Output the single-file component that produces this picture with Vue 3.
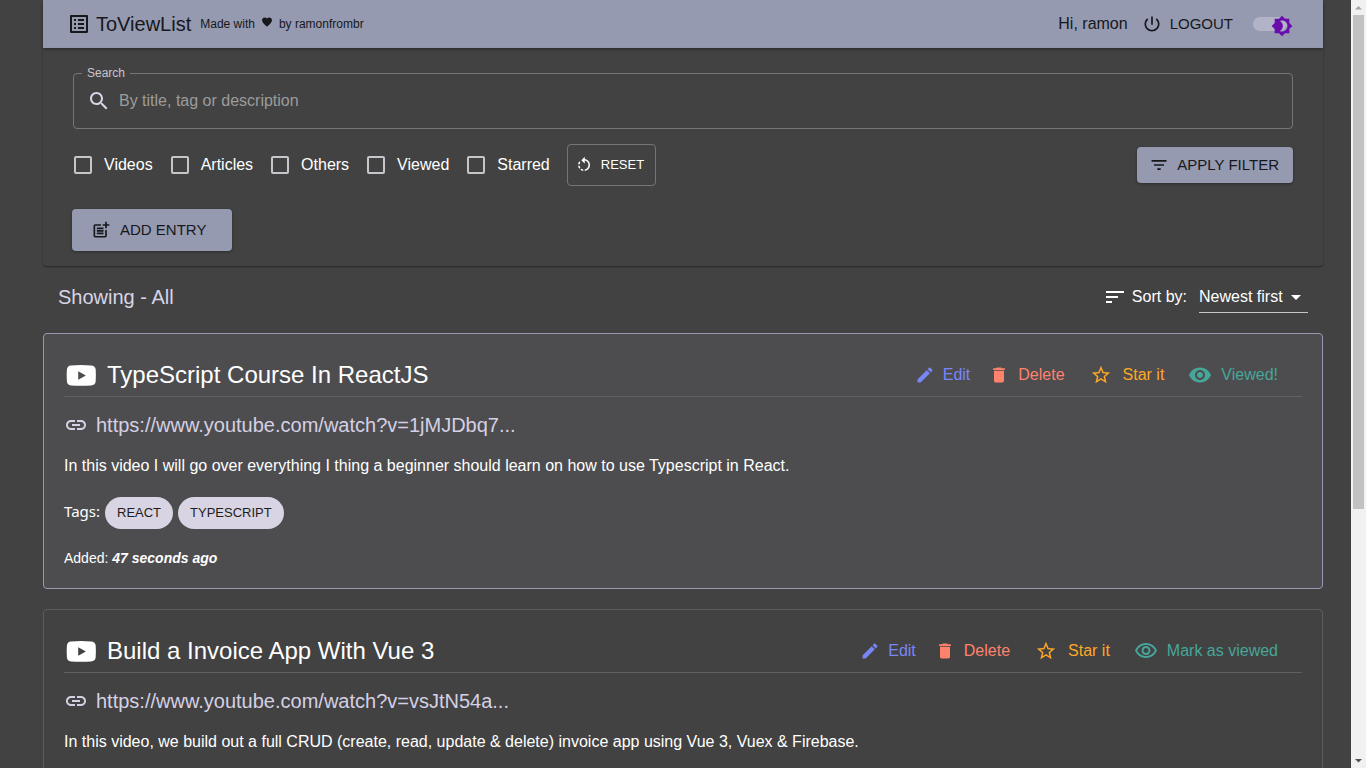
<script setup>
import { reactive, ref } from 'vue'

const icons = {
  list: 'M19 5v14H5V5h14m1.1-2H3.9c-.5 0-.9.4-.9.9v16.2c0 .4.4.9.9.9h16.2c.4 0 .9-.5.9-.9V3.9c0-.5-.5-.9-.9-.9zM11 7h6v2h-6V7zm0 4h6v2h-6v-2zm0 4h6v2h-6zM7 7h2v2H7zm0 4h2v2H7zm0 4h2v2H7z',
  heart: 'M12 21.35l-1.45-1.32C5.4 15.36 2 12.28 2 8.5 2 5.42 4.42 3 7.5 3c1.74 0 3.41.81 4.5 2.09C13.09 3.81 14.76 3 16.5 3 19.58 3 22 5.42 22 8.5c0 3.78-3.4 6.86-8.55 11.54L12 21.35z',
  power: 'M13 3h-2v10h2V3zm4.83 2.17l-1.42 1.42C17.99 7.86 19 9.81 19 12c0 3.87-3.13 7-7 7s-7-3.13-7-7c0-2.19 1.01-4.14 2.58-5.42L6.17 5.17C4.23 6.82 3 9.26 3 12c0 4.97 4.03 9 9 9s9-4.03 9-9c0-2.74-1.23-5.18-3.17-6.83z',
  night: 'M20 8.69V4h-4.69L12 .69 8.69 4H4v4.69L.69 12 4 15.31V20h4.69L12 23.31 15.31 20H20v-4.69L23.31 12 20 8.69zM12 18c-.89 0-1.74-.2-2.5-.55C11.56 16.5 13 14.42 13 12s-1.44-4.5-3.5-5.45C10.26 6.2 11.11 6 12 6c3.31 0 6 2.69 6 6s-2.69 6-6 6z',
  search: 'M15.5 14h-.79l-.28-.27C15.41 12.59 16 11.11 16 9.5 16 5.91 13.09 3 9.5 3S3 5.91 3 9.5 5.91 16 9.5 16c1.61 0 3.09-.59 4.23-1.57l.27.28v.79l5 4.99L20.49 19l-4.99-5zm-6 0C7.01 14 5 11.99 5 9.5S7.01 5 9.5 5 14 7.01 14 9.5 11.99 14 9.5 14z',
  reset: 'M7.11 8.53L5.7 7.11C4.8 8.27 4.24 9.61 4.07 11h2.02c.14-.87.49-1.72 1.02-2.47zM6.09 13H4.07c.17 1.39.72 2.73 1.62 3.89l1.41-1.42c-.52-.75-.87-1.59-1.01-2.47zm1.01 5.32c1.16.9 2.51 1.44 3.9 1.61V17.9c-.87-.15-1.71-.49-2.46-1.03L7.1 18.32zM13 4.07V1L8.45 5.55 13 10V6.09c2.84.48 5 2.94 5 5.91s-2.16 5.43-5 5.91v2.02c3.95-.49 7-3.85 7-7.93s-3.05-7.44-7-7.93z',
  filter: 'M10 18h4v-2h-4v2zM3 6v2h18V6H3zm3 7h12v-2H6v2z',
  sort: 'M3 18h6v-2H3v2zM3 6v2h18V6H3zm0 7h12v-2H3v2z',
  add: 'M17 19.22H5V7h7V5H5c-1.1 0-2 .9-2 2v12c0 1.1.9 2 2 2h12c1.1 0 2-.9 2-2v-7h-2v7.22zM19 2h-2v3h-3c.01.01 0 2 0 2h3v2.99c.01.01 2 0 2 0V7h3V5h-3V2zM7 9h8v2H7zM7 12v2h8v-2h-3zM7 15h8v2H7z',
  link: 'M3.9 12c0-1.71 1.39-3.1 3.1-3.1h4V7H7c-2.76 0-5 2.24-5 5s2.24 5 5 5h4v-1.9H7c-1.71 0-3.1-1.39-3.1-3.1zM8 13h8v-2H8v2zm9-6h-4v1.9h4c1.71 0 3.1 1.39 3.1 3.1s-1.39 3.1-3.1 3.1h-4V17h4c2.76 0 5-2.24 5-5s-2.24-5-5-5z',
  edit: 'M3 17.25V21h3.75L17.81 9.94l-3.75-3.75L3 17.25zM20.71 7.04c.39-.39.39-1.02 0-1.41l-2.34-2.34c-.39-.39-1.02-.39-1.41 0l-1.83 1.83 3.75 3.75 1.83-1.83z',
  trash: 'M6 19c0 1.1.9 2 2 2h8c1.1 0 2-.9 2-2V7H6v12zM19 4h-3.5l-1-1h-5l-1 1H5v2h14V4z',
  star: 'M22 9.24l-7.19-.62L12 2 9.19 8.63 2 9.24l5.46 4.73L5.82 21 12 17.27 18.18 21l-1.63-7.03L22 9.24zM12 15.4l-3.76 2.27 1-4.28-3.32-2.88 4.38-.38L12 6.1l1.71 4.04 4.38.38-3.32 2.88 1 4.28L12 15.4z',
  eye: 'M12 4.5C7 4.5 2.73 7.61 1 12c1.73 4.39 6 7.5 11 7.5s9.27-3.11 11-7.5c-1.73-4.39-6-7.5-11-7.5zM12 17c-2.76 0-5-2.24-5-5s2.24-5 5-5 5 2.24 5 5-2.24 5-5 5zm0-8c-1.66 0-3 1.34-3 3s1.34 3 3 3 3-1.34 3-3-1.34-3-3-3z',
  eyeOutline: 'M12 6c3.79 0 7.17 2.13 8.82 5.5C19.17 14.87 15.79 17 12 17s-7.17-2.13-8.82-5.5C4.83 8.13 8.21 6 12 6m0-2C7 4 2.73 7.11 1 11.5 2.73 15.89 7 19 12 19s9.27-3.11 11-7.5C21.27 7.11 17 4 12 4zm0 5c1.38 0 2.5 1.12 2.5 2.5S13.38 14 12 14s-2.5-1.12-2.5-2.5S10.62 9 12 9m0-2c-2.48 0-4.5 2.02-4.5 4.5S9.52 16 12 16s4.5-2.02 4.5-4.5S14.48 7 12 7z',
}

const darkMode = ref(true)
const query = ref('')
const sortBy = ref('newest')
const filters = reactive([
  { label: 'Videos', on: false },
  { label: 'Articles', on: false },
  { label: 'Others', on: false },
  { label: 'Viewed', on: false },
  { label: 'Starred', on: false },
])

const entries = reactive([
  {
    title: 'TypeScript Course In ReactJS',
    link: 'https://www.youtube.com/watch?v=1jMJDbq7...',
    text: 'In this video I will go over everything I thing a beginner should learn on how to use Typescript in React.',
    tags: ['REACT', 'TYPESCRIPT'],
    added: '47 seconds ago',
    viewed: true,
  },
  {
    title: 'Build a Invoice App With Vue 3',
    link: 'https://www.youtube.com/watch?v=vsJtN54a...',
    text: 'In this video, we build out a full CRUD (create, read, update & delete) invoice app using Vue 3, Vuex & Firebase.',
    tags: [],
    added: '',
    viewed: false,
  },
])

function resetFilters() {
  query.value = ''
  filters.forEach((f) => (f.on = false))
}
</script>

<template>
  <div class="page">
    <div class="container">
      <header class="bar">
        <svg class="i24" viewBox="0 0 24 24"><path :d="icons.list" /></svg>
        <h1>ToViewList</h1>
        <p class="credit">
          Made with
          <svg class="i12" viewBox="0 0 24 24"><path :d="icons.heart" /></svg>
          by ramonfrombr
        </p>
        <span class="greeting">Hi, ramon</span>
        <button class="logout" type="button">
          <svg class="i20" viewBox="0 0 24 24"><path :d="icons.power" /></svg>LOGOUT
        </button>
        <label class="switch">
          <input v-model="darkMode" type="checkbox" aria-label="Dark mode" />
          <span class="track"></span>
          <svg class="thumb" viewBox="0 0 24 24"><path :d="icons.night" /></svg>
        </label>
      </header>

      <section class="panel">
        <fieldset class="search">
          <legend><label for="search">Search</label></legend>
          <div class="search-row">
            <svg class="i24" viewBox="0 0 24 24"><path :d="icons.search" /></svg>
            <input id="search" v-model="query" type="text" placeholder="By title, tag or description" />
          </div>
        </fieldset>

        <div class="filters">
          <label v-for="f in filters" :key="f.label" class="check">
            <input v-model="f.on" type="checkbox" />{{ f.label }}
          </label>
          <button class="reset" type="button" @click="resetFilters">
            <svg class="i18" viewBox="0 0 24 24"><path :d="icons.reset" /></svg>RESET
          </button>
          <button class="solid apply" type="button">
            <svg class="i20" viewBox="0 0 24 24"><path :d="icons.filter" /></svg>APPLY FILTER
          </button>
        </div>

        <button class="solid add" type="button">
          <svg class="i20" viewBox="0 0 24 24"><path :d="icons.add" /></svg>ADD ENTRY
        </button>
      </section>

      <div class="toolbar">
        <h2>Showing - All</h2>
        <svg class="i24" viewBox="0 0 24 24"><path :d="icons.sort" /></svg>
        <label for="sort">Sort by:</label>
        <div class="select">
          <select id="sort" v-model="sortBy">
            <option value="newest">Newest first</option>
            <option value="oldest">Oldest first</option>
          </select>
          <svg class="i24 caret" viewBox="0 0 24 24"><path d="M7 10l5 5 5-5z" /></svg>
        </div>
      </div>

      <article v-for="e in entries" :key="e.title" class="card" :class="{ viewed: e.viewed }">
        <div class="card-head">
          <svg class="video" viewBox="0 0 34 24">
            <path
              fill-rule="evenodd"
              d="M7 2.400Q17 1.800 27 2.400Q31.400 2.600 31.700 6.500Q32.100 12.500 31.700 18.300Q31.400 22.300 27 22.500Q17 23.200 7 22.500Q3.200 22.300 2.900 18.300Q2.400 12.500 2.900 6.500Q3.200 2.600 7 2.400ZM14.200 8.300V16.700L21.900 12.500Z"
            />
          </svg>
          <h3>{{ e.title }}</h3>
          <div class="actions">
            <button class="edit" type="button">
              <span class="slot"><svg class="i20" viewBox="0 0 24 24"><path :d="icons.edit" /></svg></span>Edit
            </button>
            <button class="delete" type="button">
              <span class="slot"><svg class="i20" viewBox="0 0 24 24"><path :d="icons.trash" /></svg></span>Delete
            </button>
            <button class="star" type="button">
              <span class="slot"><svg class="i22" viewBox="0 0 24 24"><path :d="icons.star" /></svg></span>Star it
            </button>
            <button class="view" type="button" @click="e.viewed = !e.viewed">
              <span class="slot">
                <svg class="i24" viewBox="0 0 24 24"><path :d="e.viewed ? icons.eye : icons.eyeOutline" /></svg>
              </span>{{ e.viewed ? 'Viewed!' : 'Mark as viewed' }}
            </button>
          </div>
        </div>
        <a class="link" href="#">
          <svg class="i24" viewBox="0 0 24 24"><path :d="icons.link" /></svg>{{ e.link }}
        </a>
        <p class="text">{{ e.text }}</p>
        <div v-if="e.tags.length" class="tags">
          <span class="tags-label">Tags:</span>
          <span v-for="t in e.tags" :key="t" class="tag">{{ t }}</span>
        </div>
        <p v-if="e.added" class="added">Added: <strong>{{ e.added }}</strong></p>
      </article>
    </div>

    <div class="scrollbar" aria-hidden="true">
      <svg class="arrow faint" viewBox="0 0 15 15"><path d="M4 9.500L7.500 6L11 9.500Z" /></svg>
      <div class="rail"><div class="grip"></div></div>
      <svg class="arrow" viewBox="0 0 15 15"><path d="M4 6L7.500 9.500L11 6Z" /></svg>
    </div>
  </div>
</template>

<style>
html,
body {
  margin: 0;
  background: #424242;
}
</style>

<style scoped>
.page {
  height: 100vh;
  overflow: hidden;
  background: #424242;
  color: #fff;
  font-family: "Liberation Sans", Arial, sans-serif;
  font-size: 16px;
  line-height: 24px;
}
.page * {
  box-sizing: border-box;
}
.container {
  max-width: 1280px;
  margin: 0 auto;
}
h1, h2, h3, p {
  margin: 0;
  font-weight: 400;
}
svg {
  display: block;
  flex: none;
  fill: currentColor;
}
.i12 { width: 12px; height: 12px; }
.i18 { width: 18px; height: 18px; }
.i20 { width: 20px; height: 20px; }
.i22 { width: 22px; height: 22px; }
.i24 { width: 24px; height: 24px; }
button {
  display: flex;
  align-items: center;
  margin: 0;
  padding: 0;
  border: 0;
  background: none;
  color: inherit;
  font: inherit;
  cursor: pointer;
}

.bar {
  display: flex;
  align-items: center;
  height: 48px;
  padding: 0 30px 0 24px;
  background: #959ab0;
  color: #16181c;
  box-shadow: 0 1px 3px rgba(0, 0, 0, 0.4);
}
.bar h1 {
  margin-left: 5px;
  font-size: 20px;
}
.credit {
  display: flex;
  gap: 6px;
  margin-left: 9px;
  font-size: 12px;
}
.credit svg {
  margin-top: 4px;
}
.greeting {
  margin-left: auto;
}
.logout {
  gap: 8px;
  margin-left: 14px;
  font-size: 15px;
}
.switch {
  position: relative;
  width: 40px;
  height: 24px;
  margin-left: 20px;
  cursor: pointer;
}
.switch input {
  position: absolute;
  inset: 0;
  margin: 0;
  opacity: 0;
}
.track {
  display: block;
  width: 34px;
  height: 14px;
  margin-top: 5px;
  border-radius: 7px;
  background: #b3b3c8;
}
.thumb {
  position: absolute;
  top: 3px;
  right: 0;
  width: 22px;
  height: 22px;
  color: #6a0dad;
}

.panel {
  padding: 18px 30px 15px;
  border-radius: 0 0 4px 4px;
  box-shadow: 0 1px 2px rgba(0, 0, 0, 0.4);
}
.search {
  margin: 0;
  padding: 0 16px 0 8px;
  border: 1px solid #757575;
  border-radius: 4px;
}
.search legend {
  padding: 0 5px;
  color: #c8c6cc;
  font-size: 12px;
  line-height: 14px;
}
.search-row {
  display: flex;
  align-items: center;
  gap: 8px;
  height: 48px;
  padding: 0 0 6px 5px;
  color: #d8d4e6;
}
.search input {
  flex: 1;
  min-width: 0;
  padding: 0;
  border: 0;
  outline: 0;
  background: none;
  color: #fff;
  font: inherit;
}
.search input::placeholder {
  color: #9c9c9c;
  opacity: 1;
}
.filters {
  display: flex;
  align-items: center;
  margin-top: 15px;
}
.check {
  display: flex;
  align-items: center;
  gap: 12px;
  margin: 0 17px 0 1px;
  cursor: pointer;
}
.check input {
  appearance: none;
  width: 18px;
  height: 18px;
  margin: 0;
  border: 2px solid #c6c5ca;
  border-radius: 2px;
}
.check input:checked {
  background: #959ab0;
}
.reset {
  gap: 8px;
  height: 42px;
  padding: 0 11px 0 7px;
  border: 1px solid #757575;
  border-radius: 4px;
  font-size: 13px;
}
.solid {
  border-radius: 4px;
  background: #959ab0;
  color: #16181c;
  font-size: 15px;
  box-shadow: 0 1px 3px rgba(0, 0, 0, 0.35);
}
.apply {
  gap: 8px;
  height: 36px;
  margin-left: auto;
  padding: 0 14px 0 12px;
}
.add {
  gap: 9px;
  height: 42px;
  margin: 23px 0 0 -1px;
  padding: 0 26px 0 19px;
}

.toolbar {
  display: flex;
  align-items: center;
  height: 32px;
  margin: 15px 15px 20px;
}
.toolbar h2 {
  margin-right: auto;
  color: #d8d4e6;
  font-size: 20px;
}
.toolbar label {
  margin: 0 12px 0 5px;
}
.select {
  position: relative;
  border-bottom: 1px solid #c6c5ca;
}
.select select {
  appearance: none;
  display: block;
  height: 31px;
  padding: 0 25px 0 0;
  border: 0;
  outline: 0;
  background: none;
  color: #fff;
  font: inherit;
}
.select option {
  color: #222;
}
.caret {
  position: absolute;
  top: 4px;
  right: 0;
  pointer-events: none;
}

.card {
  margin-bottom: 20px;
  padding: 20px 20px 18px;
  border: 1px solid #5c5c5c;
  border-radius: 4px;
}
.card.viewed {
  border-color: #959ab0;
  background: #4d4d4f;
}
.card-head {
  display: flex;
  align-items: center;
  height: 43px;
  padding-right: 24px;
  border-bottom: 1px solid #606062;
}
.video {
  width: 34px;
  height: 24px;
}
.card h3 {
  margin-left: 9px;
  font-size: 24px;
}
.actions {
  display: flex;
  margin-left: auto;
}
.slot {
  display: flex;
  justify-content: center;
  width: 24px;
}
.edit {
  gap: 6px;
  color: #7986f8;
}
.delete {
  gap: 7px;
  margin-left: 17px;
  color: #ff826c;
}
.star {
  gap: 10px;
  margin-left: 24px;
  color: #ffa726;
}
.view {
  gap: 9px;
  margin-left: 24px;
  color: #46a699;
}
.link {
  display: flex;
  align-items: center;
  gap: 8px;
  margin-top: 16px;
  color: #d5d0e3;
  font-size: 20px;
  text-decoration: none;
}
.text {
  margin-top: 17px;
}
.tags {
  display: flex;
  gap: 5px;
  margin-top: 19px;
}
.tags-label {
  margin-top: 2px;
  font-family: "Noto Sans", sans-serif;
  font-size: 15px;
}
.tag {
  padding: 0 12px;
  border-radius: 16px;
  background: #d8d4e3;
  color: #1e1e20;
  font-size: 13px;
  line-height: 32px;
}
.added {
  margin-top: 17px;
  font-size: 14px;
}
.added strong {
  font-style: italic;
}

.scrollbar {
  position: fixed;
  top: 0;
  right: 0;
  bottom: 0;
  display: flex;
  flex-direction: column;
  width: 15px;
  background: #f1f1f1;
}
.arrow {
  width: 15px;
  height: 15px;
  color: #505050;
}
.arrow.faint {
  color: #a3a3a3;
}
.rail {
  flex: 1;
  padding: 0 2px;
}
.grip {
  height: 67%;
  background: #c1c1c1;
}
</style>
